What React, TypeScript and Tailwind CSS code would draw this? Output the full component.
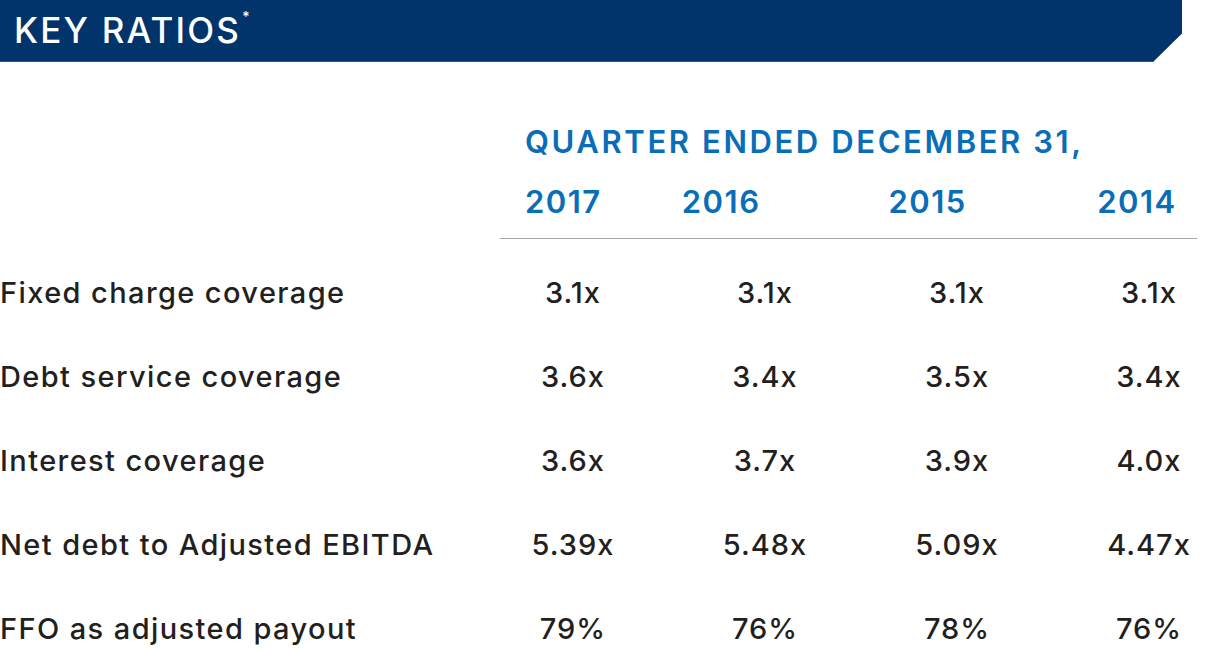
import React from 'react';

const years = [
  { y: '2017', w: 'w-[157px]' },
  { y: '2016', w: 'w-[207px]' },
  { y: '2015', w: 'w-[209px]' },
  { y: '2014', w: 'w-[100px]' },
];

const rows = [
  { label: 'Fixed charge coverage', vals: ['3.1x', '3.1x', '3.1x', '3.1x'] },
  { label: 'Debt service coverage', vals: ['3.6x', '3.4x', '3.5x', '3.4x'] },
  { label: 'Interest coverage', vals: ['3.6x', '3.7x', '3.9x', '4.0x'] },
  { label: 'Net debt to Adjusted EBITDA', vals: ['5.39x', '5.48x', '5.09x', '4.47x'] },
  { label: 'FFO as adjusted payout', vals: ['79%', '76%', '78%', '76%'] },
];

export default function App() {
  return (
    <div className="w-[1218px] h-[649px] overflow-hidden bg-white font-['Inter',sans-serif]">
      {/* Banner */}
      <div className="h-[62px] w-[1182px] bg-[#00346b] border-b border-[#2d5685] flex items-center pl-[14px] [clip-path:polygon(0_0,100%_0,100%_54%,calc(100%-29px)_100%,0_100%)]">
        <h1 className="text-[35px] font-medium text-white tracking-[2.2px] leading-none">
          KEY RATIOS<sup className="text-[14px] align-top relative top-[4px] ml-[1px]">*</sup>
        </h1>
      </div>

      {/* Column headers */}
      <div className="ml-[500px] w-[697px] pt-[62px] border-b border-[#a6a6a6] pb-[18px]">
        <div className="pl-[25px] text-[#0a6db7] font-semibold text-[31px] tracking-[2.6px] leading-[36px] whitespace-nowrap">
          QUARTER ENDED DECEMBER 31,
        </div>
        <div className="pl-[25px] mt-[24px] flex text-[#0a6db7] font-semibold text-[31px] tracking-[1.5px] leading-[36px]">
          {years.map((c) => (
            <div key={c.y} className={c.w}>{c.y}</div>
          ))}
        </div>
      </div>

      {/* Rows */}
      <div className="flex flex-col pt-[36px] gap-[48px]">
        {rows.map((r) => (
          <div key={r.label} className="grid grid-cols-[451px_140px_140px_140px_140px] gap-x-[52px] text-[#231f20] font-medium text-[29px] leading-[36px]">
            <div className="whitespace-nowrap tracking-[1.4px]">{r.label}</div>
            {r.vals.map((v, i) => (
              <div key={i} className="text-center tracking-[1px]">{v}</div>
            ))}
          </div>
        ))}
      </div>
    </div>
  );
}
